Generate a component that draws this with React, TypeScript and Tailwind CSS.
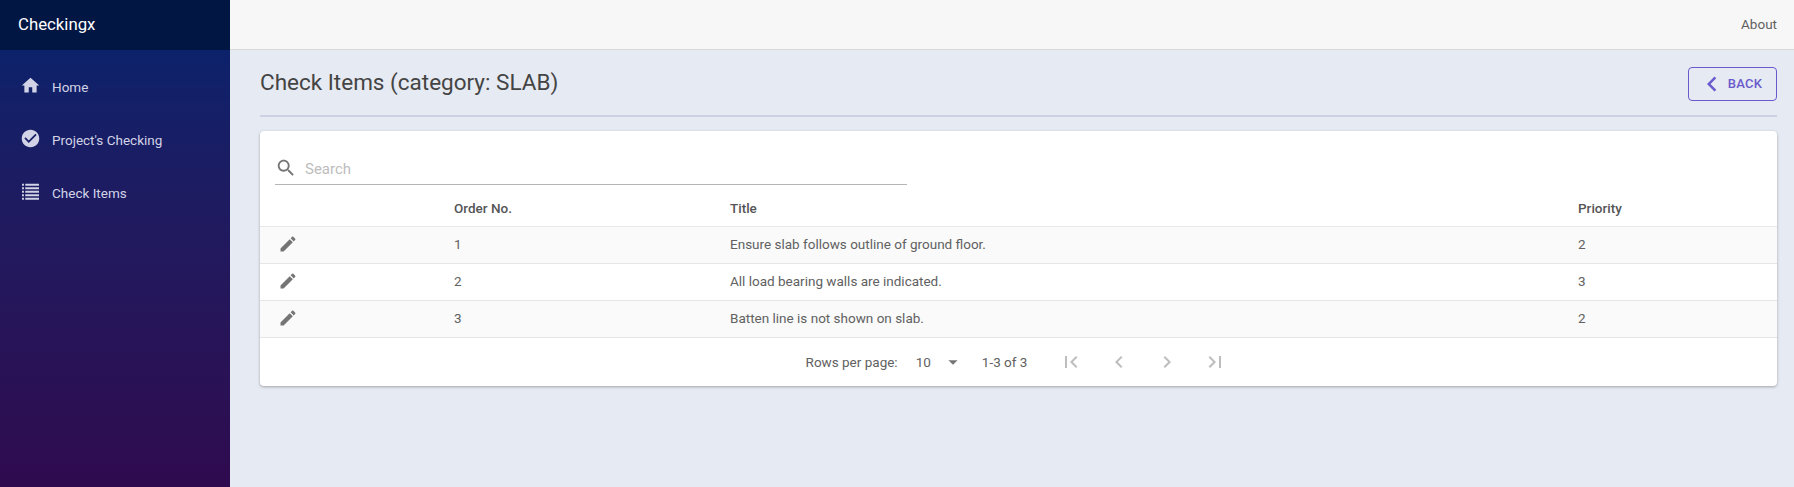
import React from "react";

const P = ({ d, className }: { d: string; className: string }) => (
  <svg viewBox="0 0 24 24" className={className} fill="currentColor"><path d={d} /></svg>
);
const home = "M10 20v-6h4v6h5v-8h3L12 3 2 12h3v8z";
const check = "M12 2C6.48 2 2 6.48 2 12s4.48 10 10 10 10-4.48 10-10S17.52 2 12 2zm-2 15l-5-5 1.41-1.41L10 14.17l7.59-7.59L19 8l-9 9z";
const list = "M2.3 3h2.2v2.4H2.3zM6 3h15.7v2.4H6zM2.3 7h2.2v2.4H2.3zM6 7h15.7v2.4H6zM2.3 11h2.2v2.4H2.3zM6 11h15.7v2.4H6zM2.3 15h2.2v2.4H2.3zM6 15h15.7v2.4H6zM2.3 19h2.2v2.4H2.3zM6 19h15.7v2.4H6z";
const edit = "M3 17.25V21h3.75L17.81 9.94l-3.75-3.75L3 17.25zM20.71 7.04c.39-.39.39-1.02 0-1.41l-2.34-2.34c-.39-.39-1.02-.39-1.41 0l-1.83 1.83 3.75 3.75 1.83-1.83z";
const search = "M15.5 14h-.79l-.28-.27C15.41 12.59 16 11.11 16 9.5 16 5.91 13.09 3 9.5 3S3 5.91 3 9.5 5.91 16 9.5 16c1.61 0 3.09-.59 4.23-1.57l.27.28v.79l5 4.99L20.49 19l-4.99-5zm-6 0C7.01 14 5 11.99 5 9.5S7.01 5 9.5 5 14 7.01 14 9.5 11.99 14 9.5 14z";
const left = "M15.41 7.41L14 6l-6 6 6 6 1.41-1.41L10.83 12z";
const right = "M10 6L8.59 7.41 13.17 12l-4.58 4.59L10 18l6-6z";
const first = "M18.41 16.59L13.82 12l4.59-4.59L17 6l-6 6 6 6zM6 6h2v12H6z";
const last = "M5.59 7.41L10.18 12l-4.59 4.59L7 18l6-6-6-6zM16 6h2v12h-2z";
const drop = "M7 10l5 5 5-5z";

const nav = [
  { icon: home, label: "Home" },
  { icon: check, label: "Project's Checking" },
  { icon: list, label: "Check Items" },
];
const rows = [
  { n: "1", t: "Ensure slab follows outline of ground floor.", p: "2" },
  { n: "2", t: "All load bearing walls are indicated.", p: "3" },
  { n: "3", t: "Batten line is not shown on slab.", p: "2" },
];
const cols = "grid grid-cols-[194px_276px_848px_1fr] items-center";

export default function App() {
  return (
    <div className="flex h-[487px] w-[1794px] overflow-hidden bg-[#e6eaf2] font-['Roboto',sans-serif]">
      <aside className="flex w-[230px] shrink-0 flex-col bg-gradient-to-b from-[#00246e] to-[#2f0a4f]">
        <div className="flex h-[50px] items-center bg-[#021643] pl-[18px] text-[16.8px] text-white">Checkingx</div>
        <nav className="flex flex-col pt-[11px] text-[13.5px] text-[#d2d3e6]">
          {nav.map((n) => (
            <div key={n.label} className="flex h-[53px] items-center pl-[20px]">
              <P d={n.icon} className="h-[21px] w-[21px] -translate-y-[2px]" />
              <span className="ml-[11px]">{n.label}</span>
            </div>
          ))}
        </nav>
      </aside>
      <div className="flex min-w-0 flex-1 flex-col">
        <header className="flex h-[50px] items-center justify-end border-b border-[#d8d8d8] bg-[#f7f7f7] pr-[17px] text-[13.5px] text-[#5f5f5f]">About</header>
        <main className="flex flex-col pl-[30px] pr-[17px]">
          <div className="flex h-[67px] items-center justify-between border-b-2 border-[#cdd2e2]">
            <h1 className="text-[22.5px] font-normal text-[#444]">Check Items (category: SLAB)</h1>
            <button className="mt-[2px] flex h-[34px] w-[89px] items-center justify-center rounded border border-[#6a5acd] text-[13px] font-medium tracking-[0.3px] text-[#6a5acd]">
              <P d={left} className="-ml-[6px] mr-[1px] h-[30px] w-[30px]" />
              BACK
            </button>
          </div>
          <section className="mt-[14px] rounded bg-white shadow-[0_1px_3px_rgba(0,0,0,0.3)]">
            <div className="pl-[15px] pt-[20px]">
              <div className="flex h-[34px] w-[632px] items-center border-b border-[#b5b5b5]">
                <P d={search} className="h-[22px] w-[22px] text-[#757575]" />
                <span className="ml-[8px] pt-[3px] text-[15px] text-[#bdbdbd]">Search</span>
              </div>
            </div>
            <div className={`${cols} mt-[5px] h-[37px] border-b border-[#e8e8e8] text-[13.5px] font-medium text-[#555]`}>
              <span />
              <span>Order No.</span>
              <span>Title</span>
              <span>Priority</span>
            </div>
            {rows.map((r, i) => (
              <div key={r.n} className={`${cols} h-[37px] border-b border-[#e5e5e5] pb-[2px] text-[13.5px] text-[#616161] ${i % 2 === 0 ? "bg-[#fafafa]" : "bg-white"}`}>
                <span className="pl-[18px]"><P d={edit} className="h-[20px] w-[20px] text-[#757575]" /></span>
                <span>{r.n}</span>
                <span>{r.t}</span>
                <span>{r.p}</span>
              </div>
            ))}
            <div className="flex h-[48px] items-center justify-center pr-[4px] text-[13.5px] text-[#616161]">
              <span>Rows per page:</span>
              <span className="ml-[18px]">10</span>
              <P d={drop} className="ml-[11px] h-[22px] w-[22px] text-[#757575]" />
              <span className="ml-[18px]">1-3 of 3</span>
              <div className="ml-[32px] flex gap-[24px] text-[#bdbdbd]">
                <P d={first} className="h-[24px] w-[24px]" />
                <P d={left} className="h-[24px] w-[24px]" />
                <P d={right} className="h-[24px] w-[24px]" />
                <P d={last} className="h-[24px] w-[24px]" />
              </div>
            </div>
          </section>
        </main>
      </div>
    </div>
  );
}
